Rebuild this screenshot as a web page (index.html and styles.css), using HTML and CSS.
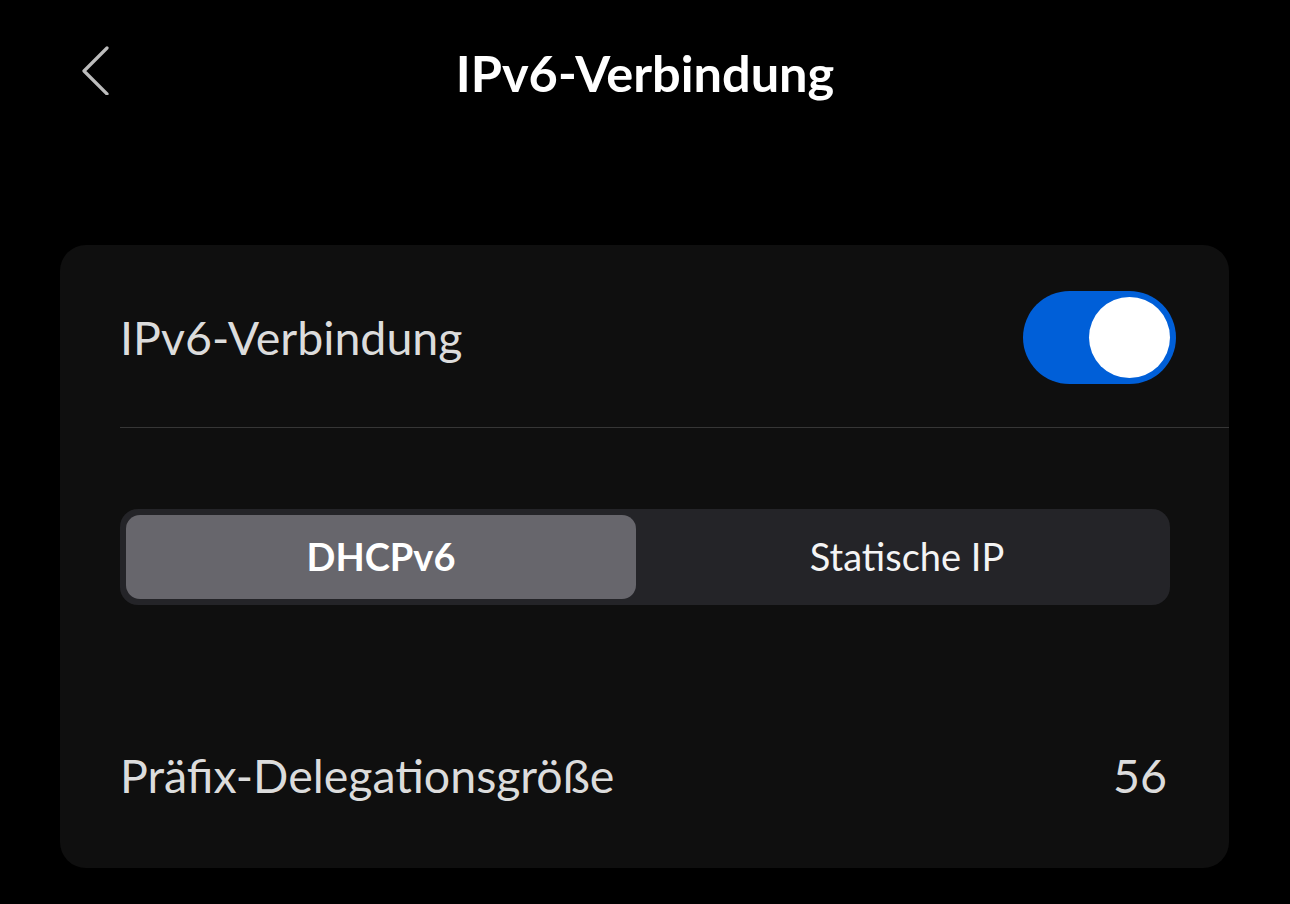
FILE: index.html
```html
<!DOCTYPE html>
<html lang="de">
<head>
  <meta charset="UTF-8">
  <title>IPv6-Verbindung</title>
  <meta name="viewport" content="width=device-width, initial-scale=1.0">
  <link rel="stylesheet" href="styles.css">
</head>
<body>

  <!-- Kopfzeile -->
  <header class="topbar">
    <button class="back" aria-label="Zurück">
      <svg width="30" height="50" viewBox="0 0 30 50">
        <polyline points="25,3 2,26 25,49" fill="none" stroke="#bdbdbd" stroke-width="3.2" stroke-linecap="round" stroke-linejoin="round"/>
      </svg>
    </button>
    <h1 class="title">IPv6-Verbindung</h1>
  </header>

  <!-- Karte -->
  <main class="card">
    <div class="row row-toggle">
      <span class="label">IPv6-Verbindung</span>
      <div class="switch on"><span class="knob"></span></div>
    </div>

    <div class="divider"></div>

    <div class="segmented">
      <div class="seg active">DHCPv6</div>
      <div class="seg">Statische IP</div>
    </div>

    <div class="row row-value">
      <span class="label">Präfix-Delegationsgröße</span>
      <span class="value">56</span>
    </div>
  </main>

</body>
</html>
```

FILE: styles.css
```css
body {
  margin: 0;
  background-color: #000;
  color: #fff;
  font-family: Lato, "Noto Sans", sans-serif;
  width: 1290px;
  height: 904px;
  overflow: hidden;
}

.topbar {
  position: relative;
  height: 150px;
  display: flex;
  align-items: center;
  justify-content: center;
}

.back {
  position: absolute;
  left: 82px;
  top: 45px;
  background: none;
  border: 0;
  padding: 0;
  display: flex;
}

.title {
  margin: 0 0 6px 0;
  font-size: 50.5px;
  font-weight: 700;
  color: #fff;
}

.card {
  margin: 95px 61px 0 60px;
  background-color: #0f0f0f;
  border-radius: 26px;
  height: 623px;
  box-sizing: border-box;
  padding-left: 60px;
}

.row {
  display: flex;
  align-items: center;
  justify-content: space-between;
}

.label {
  font-size: 46.5px;
  color: #dcdcdc;
}

.row-toggle {
  height: 182px;
  padding-right: 53px;
  padding-top: 2px;
  box-sizing: border-box;
}

.switch {
  width: 153px;
  height: 93px;
  border-radius: 47px;
  background-color: #d0d0d0;
  display: flex;
  align-items: center;
  justify-content: flex-start;
  padding: 0 6px;
  box-sizing: border-box;
}

.switch.on {
  background-color: #005fd8;
  justify-content: flex-end;
}

.knob {
  width: 81px;
  height: 81px;
  border-radius: 50%;
  background-color: #fff;
}

.divider {
  height: 1px;
  background-color: #363636;
}

.segmented {
  margin: 81px 59px 0 0;
  height: 96px;
  background-color: #242428;
  border-radius: 18px;
  padding: 6px;
  box-sizing: border-box;
  display: grid;
  grid-template-columns: 510px 1fr;
}

.seg {
  display: flex;
  align-items: center;
  justify-content: center;
  font-size: 38px;
  color: #f4f4f4;
  border-radius: 14px;
  padding-bottom: 2px;
}

.seg + .seg {
  padding-left: 14px;
}

.seg.active {
  background-color: #67666c;
  font-weight: 700;
  color: #fff;
}

.row-value {
  height: 342px;
  padding-right: 62px;
  padding-bottom: 2px;
  box-sizing: border-box;
}

.value {
  font-size: 46.5px;
  color: #dcdcdc;
}
```
